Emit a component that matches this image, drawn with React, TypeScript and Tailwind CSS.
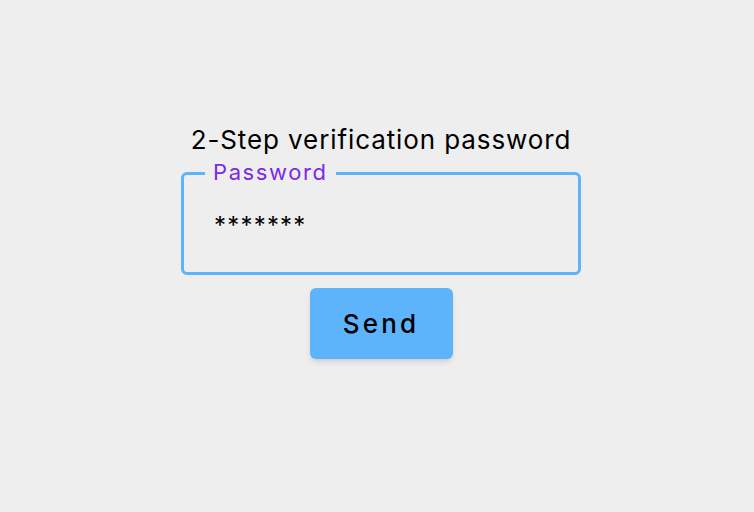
export default function App() {
  return (
    <div
      className="min-h-screen bg-[#eeeeee] flex flex-col items-center pt-[124px] pl-[8px]"
      style={{ fontFamily: "Inter, 'Noto Sans', sans-serif" }}
    >
      <h1 className="text-[26px] leading-[32px] tracking-[0.9px] text-black">2-Step verification password</h1>

      {/* password field */}
      <fieldset className="mt-[2px] w-[400px] h-[117px] border-[3px] border-[#5db4fb] rounded-[6px] pl-[21px] pr-4 m-0">
        <legend className="px-2 pb-[3px] text-[22px] leading-[28px] tracking-[1.6px] text-[#7b2ae8]">Password</legend>
        <div className="mt-[23px] pl-[9px] text-[24px] leading-[28px] tracking-[1.2px] text-black">*******</div>
      </fieldset>

      <button className="mt-[13px] w-[143px] h-[71px] bg-[#5db4fb] rounded-[6px] shadow-md text-[26px] font-medium tracking-[0.12em] text-black">
        Send
      </button>
    </div>
  );
}
